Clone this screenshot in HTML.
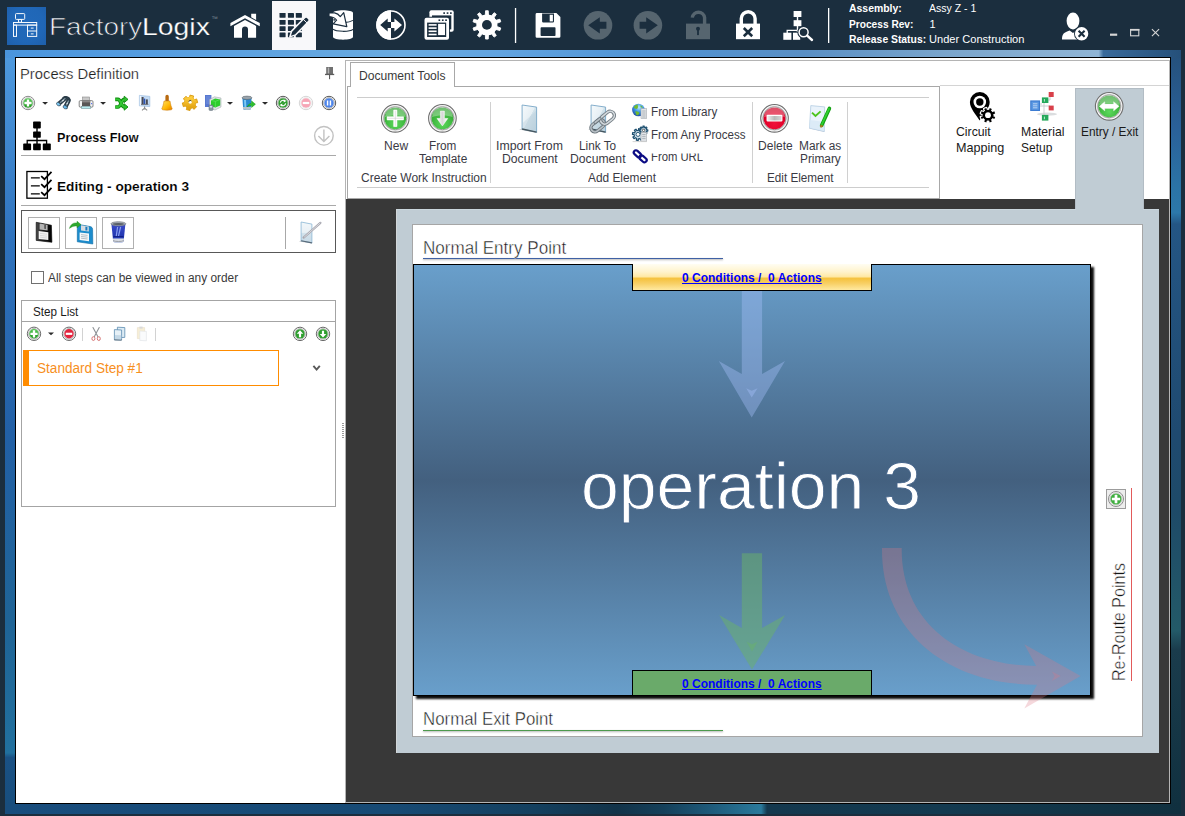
<!DOCTYPE html>
<html lang="en">
<head>
<meta charset="utf-8">
<title>FactoryLogix - Process Definition</title>
<style>
*{box-sizing:border-box;margin:0;padding:0}
html,body{width:1185px;height:816px;overflow:hidden;background:#1b2e3e;font-family:"Liberation Sans",sans-serif}
#app{position:relative;width:1185px;height:816px;overflow:hidden;background:#1b2e3e}
#app div{position:absolute}
.t{position:absolute;white-space:pre;line-height:1;transform-origin:0 0;display:block}
svg{position:absolute;left:0;top:0}

</style>
</head>
<body>
<div id="app">
<!-- window chrome / wallpaper frame -->
<div id="frame" style="left:5px;top:50px;width:1176px;height:764px;background:
 linear-gradient(90deg,#4a95dd 0%,#5aa0e0 17%,#6aabe0 34%,#62a4e0 42%,#4f93d4 55%,#5a8fc4 68%,#7aa5cc 80%,#90b5d5 93%,#3a6a9a 93.4%,#25507a 100%) top left/100% 8px no-repeat,
 linear-gradient(90deg,#184d7d 0%,#174a74 33%,#14405f 45%,#123349 52%,#15405a 56%,#1e5a7a 60%,#2a7a9c 64.3%,#14384e 64.8%,#133a50 80%,#10303f 100%) bottom left/100% 11px no-repeat,
 linear-gradient(180deg,#4f9be0 0%,#2f72bc 25%,#2260a6 50%,#1f6496 75%,#21709e 92%,#1a5184 92.6%,#174d7c 100%) top left/11px 100% no-repeat,
 linear-gradient(180deg,#25507a 0%,#2a6098 10%,#2b74a6 18%,#2c78aa 21.3%,#245684 22.8%,#1f4a70 50%,#1e4a68 60%,#235a68 76%,#1a3c4c 78.5%,#10303f 100%) top right/11px 100% no-repeat"></div>
<div id="titlebar" style="left:0;top:0;width:1185px;height:50px;background:#1b2e3e"></div>
<div id="logo" style="left:7px;top:7px;width:39px;height:38px;background:radial-gradient(ellipse at 50% 45%,#2169ba 0%,#2067b7 60%,#1e5fab 100%)"></div>
<div id="tab-process" style="left:272px;top:1px;width:44px;height:49px;background:#f8f8fa"></div>

<!-- client area -->
<div id="client" style="left:15px;top:57px;width:1156px;height:747px;background:#fff;border:1px solid #000"></div>

<!-- left panel: Process Definition -->
<div id="left-panel" style="left:16px;top:58px;width:329px;height:745px;background:#fff"></div>
<div class="hr" style="left:21px;top:155px;width:315px;height:1px;background:#a9a9a9"></div>
<div class="hr" style="left:21px;top:205px;width:315px;height:1px;background:#a9a9a9"></div>
<div id="edit-toolbar" style="left:21px;top:210px;width:315px;height:43px;border:1px solid #585858;background:#fff"></div>
<div class="btn" style="left:28px;top:217px;width:32px;height:32px;border:1px solid #b0b0b0;background:#fff"></div>
<div class="btn" style="left:65px;top:217px;width:32px;height:32px;border:1px solid #b0b0b0;background:#fff"></div>
<div class="btn" style="left:102px;top:217px;width:32px;height:32px;border:1px solid #b0b0b0;background:#fff"></div>
<div class="vsep" style="left:285px;top:217px;width:1px;height:32px;background:#a8a8a8"></div>
<div id="chk" style="left:31px;top:271px;width:13px;height:13px;border:1px solid #707070;background:#fff"></div>
<div id="steplist" style="left:21px;top:300px;width:315px;height:207px;border:1px solid #a4a4a4;background:#fff"></div>
<div class="hr" style="left:21px;top:321px;width:315px;height:1px;background:#a4a4a4"></div>
<div class="vsep" style="left:82px;top:328px;width:1px;height:13px;background:#d2d2d2"></div>
<div class="vsep" style="left:155px;top:328px;width:1px;height:13px;background:#d2d2d2"></div>
<div id="step1" style="left:23px;top:350px;width:256px;height:36px;border:1px solid #ff8c00;border-left:6px solid #ff8c00;background:#fff"></div>
<div id="splitter" style="left:342px;top:423px;width:2px;height:16px;background:repeating-linear-gradient(180deg,#9a9a9a 0,#9a9a9a 1px,#fff 1px,#fff 2px)"></div>

<!-- right panel -->
<div id="right-panel" style="left:345px;top:60px;width:825px;height:743px;background:#fff;border:1px solid #b4b4b4"></div>
<div id="side-buttons" style="left:940px;top:85px;width:229px;height:114px;background:#fff;border-top:1px solid #d4d4d4"></div>
<div id="ribbon" style="left:347px;top:86px;width:593px;height:113px;background:#fff;border:1px solid #a8a8a8"></div>
<div id="ribbon-tab" style="left:350px;top:62px;width:105px;height:25px;background:#fff;border:1px solid #a8a8a8;border-bottom:none"></div>
<div class="hr" style="left:357px;top:97px;width:572px;height:1px;background:#cdcdcd"></div>
<div class="hr" style="left:357px;top:187px;width:572px;height:1px;background:#cdcdcd"></div>
<div class="vsep" style="left:490px;top:102px;width:1px;height:81px;background:#d0d0d0"></div>
<div class="vsep" style="left:752px;top:102px;width:1px;height:81px;background:#d0d0d0"></div>
<div class="vsep" style="left:847px;top:102px;width:1px;height:81px;background:#d0d0d0"></div>

<div id="workspace" style="left:346px;top:199px;width:823px;height:603px;background:#383838"></div>
<div id="entry-tab" style="left:1075px;top:88px;width:69px;height:123px;background:#c0ccd4;border:1px solid #b2bcc4;border-bottom:none"></div>
<div id="entry-panel" style="left:396px;top:209px;width:763px;height:544px;background:#c0ccd4;border-left:1px solid #d2d6d8;border-top:1px solid #cad6dd"></div>
<div id="entry-tab-join" style="left:1076px;top:205px;width:67px;height:8px;background:#c0ccd4"></div>
<div id="entry-inner" style="left:412px;top:224px;width:731px;height:513px;background:#fff;border:1px solid #a6a6a6"></div>
<div class="ul" style="left:423px;top:258px;width:300px;height:1px;background:#3f61a5;box-shadow:0 1px 2px rgba(0,0,0,.4)"></div>
<div class="ul" style="left:423px;top:730px;width:300px;height:1px;background:#4d9a4d;box-shadow:0 1px 2px rgba(0,0,0,.4)"></div>
<div id="op-box" style="left:413px;top:264px;width:678px;height:432px;border:1px solid #000;background:linear-gradient(180deg,#699fcb 0%,#43607f 50%,#699fcb 100%);box-shadow:3px 3px 2px rgba(0,0,0,.95)"></div>
<div id="entry-cond" style="left:632px;top:264px;width:240px;height:27px;border:1px solid #000;border-top:none;background:linear-gradient(180deg,#fffdf2 0%,#fff3cc 30%,#ffe9a6 48%,#f5c23e 56%,#f8d066 75%,#ffe9a0 100%)"></div>
<div id="exit-cond" style="left:632px;top:670px;width:240px;height:26px;border:1px solid #000;background:#6aaa6a"></div>
<div id="reroute-add" style="left:1106px;top:489px;width:20px;height:20px;border:1px solid #9c9c9c;background:#ededed"></div>
<div class="vsep" style="left:1131px;top:488px;width:1px;height:193px;background:#e25a5a"></div>

<svg id="icons" width="1185" height="816" viewBox="0 0 1185 816">
<g id="ic-logo" fill="none" stroke="#f4f8fc" stroke-width="1">
<rect x="15.5" y="13.6" width="9.2" height="5.8" rx="0.8"/>
<rect x="18.5" y="19.5" width="3" height="2.8"/>
<rect x="13.5" y="22.5" width="23.2" height="2.6"/>
<rect x="13.5" y="25.1" width="3" height="11.3"/>
<rect x="27.5" y="25.1" width="9.2" height="11.3"/>
<path d="M27.5 31h9.2M30.8 28.1h2.8M30.8 33.9h2.8"/>
</g>
<g id="ic-home" fill="#ffffff">
<path d="M230.4 23.1 L245 15 L259.8 23.1 V26.3 L245 18.3 L230.4 26.3 Z"/>
<path d="M251.2 13.8 H256.1 V20 L251.2 17.3 Z"/>
<path d="M234 37.8 V25.9 L245 19.9 L256.1 25.9 V37.8 H248 V29.6 a3 3 0 0 0 -6 0 V37.8 Z"/>
</g>
<g id="ic-process" fill="#1b2e3e"><rect x="279.5" y="13.1" width="6.1" height="4.6" rx="0.4"/><rect x="287.9" y="13.1" width="6.1" height="4.6" rx="0.4"/><rect x="295.8" y="13.1" width="6.1" height="4.6" rx="0.4"/><rect x="279.5" y="20.1" width="6.1" height="4.6" rx="0.4"/><rect x="287.9" y="20.1" width="6.1" height="4.6" rx="0.4"/><rect x="295.8" y="20.1" width="6.1" height="4.6" rx="0.4"/><rect x="279.5" y="26.3" width="6.1" height="4.6" rx="0.4"/><rect x="287.9" y="26.3" width="6.1" height="4.6" rx="0.4"/><rect x="295.8" y="26.3" width="6.1" height="4.6" rx="0.4"/><rect x="279.5" y="32.6" width="6.1" height="4.6" rx="0.4"/><rect x="287.9" y="32.6" width="6.1" height="4.6" rx="0.4"/><rect x="295.8" y="32.6" width="6.1" height="4.6" rx="0.4"/>
<g transform="translate(289.8 36.9) rotate(-45.9)">
<path d="M0 0 L5.4 -2.7 H24.4 a1.8 1.8 0 0 1 1.8 1.8 V0.9 a1.8 1.8 0 0 1 -1.8 1.8 H5.4 Z" fill="#1b2e3e" stroke="#f8f8fa" stroke-width="1.5" stroke-linejoin="round"/>
<path d="M22 -2.9 V2.9" stroke="#f8f8fa" stroke-width="0.9"/>
</g></g>
<g id="ic-db" fill="#ffffff">
<path d="M333 13 C333 9.4 353 9.4 353 13 V36.8 C353 40.6 333 40.6 333 36.8 Z"/>
<path d="M333 29.2 C336 32 350 32 353 29.4" fill="none" stroke="#1b2e3e" stroke-width="1.1"/>
<path d="M344 22.6 C348 22.4 351 21.6 353 20.4" fill="none" stroke="#1b2e3e" stroke-width="1.1"/>
<path d="M329 12.9 H334.6 C337.4 13.4 339 14.8 340.3 16.6 L343.7 12.7 L346.8 26.6 L333.1 23.8 L336.6 20.2 C335.4 18.2 333.6 16.8 329 16.5 Z" stroke="#1b2e3e" stroke-width="1.2" stroke-linejoin="round"/>
<path d="M333.2 18.4 L335.6 19.8 L333.8 21.2 Z" fill="#1b2e3e"/>
</g>
<g id="ic-route">
<circle cx="391" cy="25" r="14" fill="none" stroke="#ffffff" stroke-width="1.6"/>
<path d="M391 10.2 A14.8 14.8 0 0 0 391 39.8 Z" fill="#ffffff"/>
<path d="M380.2 25 L387.7 18.6 V22.1 H391 V27.9 H387.7 V31.4 Z" fill="#1b2e3e"/>
<path d="M402 25 L394.4 18.6 V22.1 H391 V27.9 H394.4 V31.4 Z" fill="#ffffff"/>
</g>
<g id="ic-windows">
<rect x="429.4" y="10.2" width="24.3" height="21.5" rx="2" fill="#ffffff"/>
<rect x="432" y="15.4" width="19.3" height="14" fill="#1b2e3e"/>
<rect x="423.6" y="16.8" width="26.3" height="23.8" rx="2.6" fill="#1b2e3e"/>
<rect x="424.5" y="17.7" width="24.5" height="22" rx="2" fill="#ffffff"/>
<rect x="427.1" y="22.6" width="19.1" height="14.4" fill="#1b2e3e"/>
<g fill="#1b2e3e">
<rect x="443.3" y="12.3" width="1.7" height="1.6"/><rect x="446.7" y="12.3" width="1.7" height="1.6"/><rect x="450" y="12.3" width="1.7" height="1.6"/>
<rect x="438.5" y="19.4" width="1.7" height="1.6"/><rect x="441.9" y="19.4" width="1.7" height="1.6"/><rect x="445.2" y="19.4" width="1.7" height="1.6"/>
</g>
<g fill="#ffffff">
<rect x="428.6" y="24.1" width="8" height="1.6"/><rect x="428.6" y="27.3" width="8" height="1.6"/><rect x="428.6" y="30.5" width="8" height="1.6"/><rect x="428.6" y="33.7" width="8" height="1.6"/>
<rect x="438.1" y="23.9" width="6.9" height="11.2"/>
</g></g>
<g id="ic-gear"><path d="M485.34,15.02 L485.56,10.76 L488.24,10.76 L488.46,15.02 L491.44,15.99 L494.13,12.68 L496.29,14.25 L493.97,17.83 L495.81,20.36 L499.93,19.26 L500.76,21.80 L496.78,23.34 L496.78,26.46 L500.76,28.00 L499.93,30.54 L495.81,29.44 L493.97,31.97 L496.29,35.55 L494.13,37.12 L491.44,33.81 L488.46,34.78 L488.24,39.04 L485.56,39.04 L485.34,34.78 L482.36,33.81 L479.67,37.12 L477.51,35.55 L479.83,31.97 L477.99,29.44 L473.87,30.54 L473.04,28.00 L477.02,26.46 L477.02,23.34 L473.04,21.80 L473.87,19.26 L477.99,20.36 L479.83,17.83 L477.51,14.25 L479.67,12.68 L482.36,15.99Z" fill="#ffffff" stroke="#ffffff" stroke-width="0.9" stroke-linejoin="round"/><circle cx="486.9" cy="24.9" r="10.4" fill="#ffffff"/><circle cx="486.9" cy="24.9" r="4.9" fill="#1b2e3e"/></g>
<g id="ic-save">
<path d="M537 13 H556.4 L560.4 17 V36.4 a1.4 1.4 0 0 1 -1.4 1.4 H537 a1.4 1.4 0 0 1 -1.4 -1.4 V14.4 a1.4 1.4 0 0 1 1.4 -1.4 Z" fill="#ffffff"/>
<path d="M542.1 13.6 H554 V21.6 a0.8 0.8 0 0 1 -0.8 0.8 H542.9 a0.8 0.8 0 0 1 -0.8 -0.8 Z" fill="#1b2e3e"/>
<rect x="549.7" y="14.8" width="3.2" height="6.6" fill="#ffffff"/>
<rect x="540.6" y="27.2" width="14.9" height="8.9" rx="0.8" fill="#1b2e3e"/>
</g>
<g id="ic-back"><circle cx="598" cy="25.3" r="14.3" fill="#56656f"/>
<path d="M588.2 25.3 L599.8 17.2 V21.8 H606.4 V28.8 H599.8 V33.4 Z" fill="#1b2e3e"/></g>
<g id="ic-fwd"><circle cx="647.9" cy="25.3" r="14.3" fill="#56656f"/>
<path d="M657.8 25.3 L646.2 17.2 V21.8 H639.6 V28.8 H646.2 V33.4 Z" fill="#1b2e3e"/></g>
<g id="ic-unlock">
<rect x="686" y="23.6" width="24" height="15.6" fill="#56656f"/>
<path d="M692.3 17.6 A6.2 6.2 0 0 1 704.6 17.6 V24" fill="none" stroke="#56656f" stroke-width="3.4"/>
<circle cx="698" cy="28.8" r="2" fill="#1b2e3e"/><rect x="697.1" y="29.5" width="1.8" height="5.6" fill="#1b2e3e"/>
</g>
<g id="ic-lockx">
<rect x="736" y="23.6" width="24" height="15.6" fill="#ffffff"/>
<path d="M741.3 24 V18.6 A6.9 6.9 0 0 1 755.1 18.6 V24" fill="none" stroke="#ffffff" stroke-width="3.4"/>
<path d="M743.8 28 L752.2 36.2 M752.2 28 L743.8 36.2" stroke="#1b2e3e" stroke-width="2.6"/>
</g>
<g id="ic-orgsearch" fill="#ffffff">
<rect x="793.6" y="11" width="7.8" height="6"/>
<rect x="793.6" y="20.2" width="7.8" height="6"/>
<rect x="796.8" y="16" width="1.4" height="16"/>
<path d="M787.2 33 V30.4 H798" fill="none" stroke="#ffffff" stroke-width="1.3"/>
<rect x="783.3" y="32.7" width="8.1" height="7.1"/>
<rect x="793" y="32.7" width="7.2" height="7.1"/>
<circle cx="803.6" cy="32.2" r="5.2" fill="#1b2e3e" stroke="#1b2e3e" stroke-width="2.2"/>
<circle cx="803.6" cy="32.2" r="4.5" fill="#1b2e3e" stroke="#ffffff" stroke-width="1.5"/>
<path d="M807.2 35.6 L812 40" stroke="#ffffff" stroke-width="2.4" stroke-linecap="round"/>
</g>
<g id="ic-user" fill="#ffffff">
<ellipse cx="1073" cy="21" rx="6.4" ry="8.4"/>
<path d="M1062 39.6 C1062 33.6 1064 32.4 1069.6 30.4 L1073 33 L1076.4 30.4 C1079 31.2 1081 32 1082 33 V39.6 Z"/>
<circle cx="1081.6" cy="33.7" r="7.6" fill="#1b2e3e"/>
<circle cx="1081.6" cy="33.7" r="6.7" fill="#ffffff"/>
<path d="M1078.6 30.7 L1084.6 36.7 M1084.6 30.7 L1078.6 36.7" stroke="#1b2e3e" stroke-width="2.1"/>
</g>
<g id="ic-winctl" fill="none" stroke="#d6d6d6">
<path d="M1110 34.7 H1117.2" stroke-width="2.2"/>
<rect x="1130.6" y="29.6" width="8.2" height="6.2" stroke-width="1.1"/>
<path d="M1130 29.8 H1139.4" stroke-width="1.8"/>
<path d="M1151.9 29.2 L1159.1 36.2 M1159.1 29.2 L1151.9 36.2" stroke-width="1.1"/>
</g>
<g id="title-seps" fill="#fff"><rect x="514.9" y="8" width="1.3" height="35"/><rect x="828" y="8" width="1.3" height="35"/></g>
<defs>
<linearGradient id="gGreen" x1="0" y1="0" x2="0" y2="1"><stop offset="0" stop-color="#58c858"/><stop offset="1" stop-color="#1e961e"/></linearGradient>
<linearGradient id="gBell" x1="0" y1="0" x2="1" y2="1"><stop offset="0" stop-color="#ffe060"/><stop offset=".6" stop-color="#ffb400"/><stop offset="1" stop-color="#e07800"/></linearGradient>
<linearGradient id="gGold" x1="0" y1="0" x2="0" y2="1"><stop offset="0" stop-color="#ffd040"/><stop offset="1" stop-color="#e0a010"/></linearGradient>
<linearGradient id="gBin" x1="0" y1="0" x2="0" y2="1"><stop offset="0" stop-color="#3a4ac8"/><stop offset=".7" stop-color="#2036b0"/><stop offset="1" stop-color="#6a8ae8"/></linearGradient>
<linearGradient id="gDoc" x1="0" y1="0" x2="0" y2="1"><stop offset="0" stop-color="#f2f7fa"/><stop offset=".5" stop-color="#e8f0f5"/><stop offset=".52" stop-color="#d4e3ec"/><stop offset="1" stop-color="#c6d9e6"/></linearGradient>
<linearGradient id="gFloppy" x1="0" y1="0" x2="1" y2="0"><stop offset="0" stop-color="#4a4a4a"/><stop offset=".5" stop-color="#1a1a1a"/><stop offset="1" stop-color="#000"/></linearGradient>
</defs>
<g id="pd-toolbar">
<g transform="translate(28 103)">
<circle r="6.7" fill="#fff" stroke="#8c8c8c" stroke-width="1"/>
<circle r="5.3" fill="none" stroke="#8c8c8c" stroke-width="0.7" opacity=".7"/>
<circle r="4.7" fill="url(#gGreen)"/>
<g transform="scale(.9)"><path d="M-1.3 -4 H1.3 V-1.3 H4 V1.3 H1.3 V4 H-1.3 V1.3 H-4 V-1.3 H-1.3 Z" fill="#fff"/></g></g>
<path d="M42.2 102 H48 L45.1 104.8 Z" fill="#2a2a2a"/>
<g id="ic-find" stroke-linecap="round">
<path d="M59 103.6 L65.4 98.2" stroke="#2a3c48" stroke-width="4.2"/>
<path d="M65.6 106.6 L68.6 100.6" stroke="#2a3c48" stroke-width="4.4"/>
<path d="M63.6 98 C65.6 96.4 68.6 97.4 69.4 99.6" stroke="#2a3c48" stroke-width="2.6" fill="none"/>
<path d="M60.4 102.6 L65 98.6" stroke="#7e929e" stroke-width="1.3"/>
<path d="M66.4 105 L68.4 101" stroke="#7e929e" stroke-width="1.3"/>
<path d="M62.6 100.8 L63.4 100.1 M67 103.8 L67.4 103" stroke="#e8f0f4" stroke-width="1.1"/>
<ellipse cx="58.4" cy="104.2" rx="2.2" ry="1.5" transform="rotate(40 58.4 104.2)" fill="#7cc6f0" stroke="#2a3c48" stroke-width="0.5"/>
<ellipse cx="65.2" cy="107.2" rx="2.3" ry="1.6" transform="rotate(30 65.2 107.2)" fill="#6ab8ea" stroke="#2a3c48" stroke-width="0.5"/>
</g>
<g id="ic-print">
<rect x="82.6" y="97" width="7" height="4" fill="#c8c8c8" stroke="#8a8a8a" stroke-width="0.6"/>
<rect x="79.2" y="100.6" width="13.8" height="6.6" rx="1.2" fill="#f4f4f4" stroke="#6a6a6a" stroke-width="0.8"/>
<rect x="82" y="100.8" width="8.2" height="5.2" fill="#5a5656"/>
<rect x="82" y="100.8" width="8.2" height="1.6" fill="#8a8686"/>
<rect x="81.4" y="106.4" width="9.4" height="2.2" fill="#b8ecf0" stroke="#6a8a90" stroke-width="0.5"/>
<rect x="91.2" y="103" width="0.9" height="1.2" fill="#3a5af0"/>
</g>
<path d="M100.1 102 H106 L103.05 104.8 Z" fill="#2a2a2a"/>
<g id="ic-shuffle" fill="none" stroke-linejoin="round">
<g stroke="#0c8a0c" stroke-width="3.6"><path d="M115.2 99.4 H118 C121 99.4 121 107 124.4 107"/><path d="M115.2 107 H118 C121 107 121 99.4 124.4 99.4"/></g>
<path d="M124.2 96.2 L128 99.4 L124.2 102.6 Z M124.2 103.8 L128 107 L124.2 110.2 Z" fill="#30c030" stroke="#0c8a0c" stroke-width="0.9"/>
<g stroke="#34c634" stroke-width="1.9"><path d="M115.2 99.4 H118 C121 99.4 121 107 124.8 107"/><path d="M115.2 107 H118 C121 107 121 99.4 124.8 99.4"/></g>

</g>
<g id="ic-present">
<path d="M144.6 106 V109.4 M144.6 108.2 L142 110.4 M144.6 108.2 L147.2 110.4" stroke="#8a8a8a" stroke-width="1.1" fill="none"/>
<path d="M139.4 95.4 L149.8 96.4 V106.6 L139.4 105.8 Z" fill="#c4dcf6" stroke="#9cbce0" stroke-width="0.7"/><path d="M139.8 95.8 L141.2 96 V105.6 L139.8 105.4 Z" fill="#f2f8fe"/>
<rect x="141.6" y="97" width="2" height="7.2" fill="#4a4a52"/>
<rect x="143.6" y="98.6" width="1.6" height="5.4" fill="#2c54b8"/>
<rect x="145.8" y="99.4" width="2" height="4.8" fill="#4a4a52"/>
<path d="M141 104.4 H148.4" stroke="#5a5a62" stroke-width="0.8"/>
</g>
<g id="ic-bell">
<path d="M165.4 96.4 a1.7 1.7 0 0 1 3.4 0 V101 H165.4 Z" fill="#b86a10"/>
<path d="M164 101 H170 C170.6 104.4 171.2 106.8 172.2 108.6 C172.4 109.6 171 110.2 167 110.2 C163 110.2 161.6 109.6 161.8 108.6 C162.8 106.8 163.4 104.4 164 101 Z" fill="url(#gBell)" stroke="#c87808" stroke-width="0.5"/>
</g>
<g id="ic-settings"><path d="M189.64,97.21 L189.99,95.10 L193.70,96.05 L192.99,98.07 L194.66,99.69 L196.66,98.94 L197.70,102.63 L195.60,103.03 L195.02,105.28 L196.67,106.64 L194.00,109.38 L192.60,107.76 L190.36,108.39 L190.01,110.50 L186.30,109.55 L187.01,107.53 L185.34,105.91 L183.34,106.66 L182.30,102.97 L184.40,102.57 L184.98,100.32 L183.33,98.96 L186.00,96.22 L187.40,97.84Z" fill="url(#gGold)" stroke="#d89a10" stroke-width="0.9" stroke-linejoin="round"/><circle cx="190" cy="102.8" r="5.8" fill="url(#gGold)"/><circle cx="190.2" cy="102" r="1.7" fill="#fff"/><path d="M188.8 101.6 a1.5 1.5 0 0 1 2.6 -0.6" stroke="#3a3010" stroke-width="1" fill="none"/></g>
<g id="ic-deploy">
<rect x="205" y="95" width="6.4" height="12" fill="#5878d0"/>
<path d="M206 97 H210.6 M206 99 H210.6 M206 101 H210.6 M206 103 H210.6" stroke="#8aa4e4" stroke-width="0.6"/>
<path d="M209.6 99.6 L214.4 96.8 L221 98 V107 L215 110 L209.6 108 Z" fill="#e0e4e6" stroke="#9aa0a4" stroke-width="0.5"/>
<path d="M211 100.4 L215.2 98.6 L220.2 99.4 V105.6 L215.4 107.6 L211 106.2 Z" fill="#2ccc2c"/>
<path d="M211 100.4 L215.4 101.4 L220.2 99.4 M215.4 101.4 V107.6" stroke="#68e868" stroke-width="0.6" fill="none"/>
<rect x="209" y="105" width="4" height="5.4" rx="0.8" fill="#8a98a4" stroke="#5a6874" stroke-width="0.5"/>
<rect x="209.8" y="106" width="2.4" height="1.6" fill="#d0e0ea"/>
</g>
<path d="M227 102 H233 L230.0 104.8 Z" fill="#2a2a2a"/>
<g id="ic-recycle">
<path d="M242.4 98 H251.6 L250.8 109 C250.6 110.2 243.4 110.2 243.2 109 Z" fill="#2a8ad2"/>
<path d="M244 100 L244.6 108.6 H246.4 L246 100 Z" fill="#7cc8f4"/>
<path d="M242.8 107 H251.2 L250.8 109 C250.6 110.2 243.4 110.2 243.2 109 Z" fill="#b8c4cc"/>
<ellipse cx="247" cy="97.8" rx="4.9" ry="1.7" fill="#9aa4ac" stroke="#5a646c" stroke-width="0.6"/>
<path d="M247 106.8 C248.4 104.4 250 103.4 251.6 103.2 V101 L255.4 104.2 L251.6 107.4 V105.4 C250 105.4 248.6 105.8 247 106.8 Z" fill="#30c030" stroke="#109010" stroke-width="0.5"/>
</g>
<path d="M262 102 H268 L265.0 104.8 Z" fill="#2a2a2a"/>
<g transform="translate(283 103)">
<circle r="6.7" fill="#fff" stroke="#5a5a5a" stroke-width="1"/>
<circle r="5.3" fill="none" stroke="#5a5a5a" stroke-width="0.7" opacity=".7"/>
<circle r="4.7" fill="#2f9e2f"/>
<g transform="scale(.9)"><path d="M-3 -0.5 A3 3 0 0 1 1.8 -2.4 M3 0.5 A3 3 0 0 1 -1.8 2.4" fill="none" stroke="#fff" stroke-width="1.2"/><path d="M0.8 -4.2 L3.8 -2.2 L0.8 -0.6 Z M-0.8 4.2 L-3.8 2.2 L-0.8 0.6 Z" fill="#fff"/></g></g>
<g transform="translate(306 103)">
<circle r="6.7" fill="#fff" stroke="#d6d6d6" stroke-width="1"/>
<circle r="5.3" fill="none" stroke="#d6d6d6" stroke-width="0.7" opacity=".7"/>
<circle r="4.7" fill="#f6a6b6"/>
<g transform="scale(.9)"><rect x="-3.6" y="-1.2" width="7.2" height="2.4" fill="#fff"/></g></g>
<g transform="translate(329 103)">
<circle r="6.7" fill="#fff" stroke="#5a5a5a" stroke-width="1"/>
<circle r="5.3" fill="none" stroke="#5a5a5a" stroke-width="0.7" opacity=".7"/>
<circle r="4.7" fill="#4c84ea"/>
<g transform="scale(.9)"><rect x="-2.4" y="-2.8" width="1.6" height="5.6" fill="#fff"/><rect x="0.8" y="-2.8" width="1.6" height="5.6" fill="#fff"/></g></g>
</g>
<g id="ic-pin" fill="#6a6a6a">
<rect x="326.2" y="67" width="6.8" height="7" fill="#707070"/>
<rect x="327.8" y="67.6" width="1.4" height="6" fill="#b4b4b4"/>
<rect x="325" y="73.8" width="9.2" height="1.3" fill="#5c5c5c"/>
<rect x="329" y="75" width="1.1" height="4.2" fill="#5c5c5c"/>
</g>
<g id="ic-flow" fill="#000">
<rect x="33.1" y="121.5" width="7.7" height="6.9" rx="0.8"/>
<rect x="33.1" y="131.5" width="7.7" height="6.3" rx="0.8"/>
<rect x="36.3" y="128" width="1.4" height="16"/>
<path d="M27.2 144 V140.5 H46.6 V144" fill="none" stroke="#000" stroke-width="1.3"/>
<rect x="23.2" y="143.6" width="7.9" height="6.6" rx="0.8"/>
<rect x="33.1" y="143.6" width="7.7" height="6.6" rx="0.8"/>
<rect x="42.8" y="143.6" width="8" height="6.6" rx="0.8"/>
</g>
<g id="ic-collapse" fill="none" stroke="#c2c2c2" stroke-width="1.4">
<circle cx="323.9" cy="135.8" r="9.3"/>
<path d="M323.9 129.6 V141.4 M318.4 136 L323.9 141.6 L329.4 136"/>
</g>
<g id="ic-checklist" fill="none" stroke="#000">
<rect x="26.9" y="171.5" width="20.5" height="26.7" stroke-width="1.3" fill="#fff"/>
<path d="M30.9 177.8 H39.8 M30.9 185.8 H39.8 M30.9 193.8 H39.8" stroke-width="1.2"/>
<path d="M41.2 176.2 L44.5 179.2 L51.5 171.8 M41.2 184.2 L44.5 187.2 L51.5 179.8 M41.2 192.2 L44.5 195.2 L51.5 187.8" stroke-width="1.7"/>
</g>
<g id="ic-save2">
<path d="M36.2 222.3 L51.4 225.2 L51.9 242.3 L36.2 240.4 Z" fill="url(#gFloppy)" stroke="#000" stroke-width="0.6" stroke-linejoin="round"/>
<path d="M39.6 223.4 L47.6 224.9 V230.4 L39.6 229.4 Z" fill="#b4b4b4"/>
<path d="M44.2 224.8 L46 225.1 V229 L44.2 228.8 Z" fill="#5a5a5a"/>
<path d="M38.7 231 L48.3 232.2 V240 L38.7 238.9 Z" fill="#f4f4f4"/>
<path d="M40 233.4 L47 234.2 M40 235.4 L47 236.2 M40 237.2 L47 238" stroke="#c8c8c8" stroke-width="0.6"/>
</g>
<g id="ic-saveas">
<path d="M77.3 224.2 L90.4 226.6 C91.8 227 92.6 228 92.6 229.4 L92.8 244 L77.3 241.8 Z" fill="#1c8ccc" stroke="#0a6aa4" stroke-width="0.6" stroke-linejoin="round"/>
<path d="M81 225.2 L88.8 226.6 V231.6 L81 230.6 Z" fill="#d8dce0"/>
<path d="M85.4 226.6 L87.4 227 V230.6 L85.4 230.4 Z" fill="#1c7cc0"/>
<path d="M79.6 232.4 L89 233.6 V241.2 L79.6 240 Z" fill="#f6f8fa"/>
<path d="M81 234.6 L87.6 235.4 M81 236.4 L87.6 237.2 M81 238.2 L87.6 239" stroke="#8a9aa4" stroke-width="0.6"/>
<path d="M69.4 228.4 C70.6 224 74 222.4 77 223 V221.2 L81 224.6 L77 227.8 V226 C74.6 225.6 72 226.4 69.4 228.4 Z" fill="#2ea82e" stroke="#158a15" stroke-width="0.4"/>
</g>
<g id="ic-trash">
<path d="M111.4 224 H125.4 L123.6 241.4 C123.4 243.2 113.4 243.2 113.2 241.4 Z" fill="url(#gBin)"/>
<path d="M112.8 238.4 H124 L123.6 241.4 C123.4 243.2 113.4 243.2 113.2 241.4 Z" fill="#d8dce4"/>
<path d="M113 240.6 C115 241.8 121.8 241.8 123.8 240.6" stroke="#8a8e96" stroke-width="0.8" fill="none"/>
<path d="M117.6 227 L116.2 236.4 M120.6 227 L118.4 236.4" stroke="#8aa0f0" stroke-width="1.2"/>
<path d="M113.4 236.6 H123.4" stroke="#101c80" stroke-width="1"/>
<ellipse cx="118.4" cy="223.8" rx="7.4" ry="2" fill="#aab0b8" stroke="#787e86" stroke-width="0.8"/>
<ellipse cx="118.4" cy="224" rx="5.6" ry="1.1" fill="#5a6068"/>
</g>
<g id="ic-edit">
<path d="M299 241.6 L312 243.6 L312.6 242.6 L301 240.6 Z" fill="#9aa0a6" opacity=".6"/>
<path d="M301.1 222 L311.9 224.1 V242.9 L301.1 240.8 Z" fill="url(#gDoc)" stroke="#8ab6d4" stroke-width="0.8" stroke-linejoin="round"/>
<path d="M301.1 240.8 L311.9 242.9" stroke="#5a6a78" stroke-width="1.1"/>
<path d="M303.6 237.6 L320.4 222.8" stroke="#a8a8b0" stroke-width="2.2" stroke-linecap="round"/>
<path d="M304.4 237 L320 223.2" stroke="#e4e4ea" stroke-width="0.8" stroke-linecap="round"/>
</g>
<g id="sl-toolbar">
<g transform="translate(34 333.8)">
<circle r="6.7" fill="#fff" stroke="#6a6a6a" stroke-width="1"/>
<circle r="5.3" fill="none" stroke="#6a6a6a" stroke-width="0.7" opacity=".7"/>
<circle r="4.7" fill="url(#gGreen)"/>
<g transform="scale(.9)"><path d="M-1.3 -4 H1.3 V-1.3 H4 V1.3 H1.3 V4 H-1.3 V1.3 H-4 V-1.3 H-1.3 Z" fill="#fff"/></g></g>
<path d="M48 332.4 H54 L51.0 335.2 Z" fill="#2a2a2a"/>
<g transform="translate(69 333.8)">
<circle r="6.7" fill="#fff" stroke="#6a6a6a" stroke-width="1"/>
<circle r="5.3" fill="none" stroke="#6a6a6a" stroke-width="0.7" opacity=".7"/>
<circle r="4.7" fill="#e2243e"/>
<g transform="scale(.9)"><rect x="-3.6" y="-1.2" width="7.2" height="2.4" fill="#fff"/></g></g>
<g id="ic-cut">
<path d="M93 327.6 L97.8 336.6 M99.2 327.6 L94.4 336.6" stroke="#8e9296" stroke-width="1.1" stroke-linecap="round"/>
<ellipse cx="93.4" cy="338.6" rx="1.5" ry="1.9" fill="none" stroke="#d67474" stroke-width="1"/>
<ellipse cx="98.8" cy="338.6" rx="1.5" ry="1.9" fill="none" stroke="#d67474" stroke-width="1"/>
</g>
<g id="ic-copy">
<path d="M117.4 327.2 L124.8 327.6 V337.4 L117.4 337.6 Z" fill="#dcebf4" stroke="#5c8cb0" stroke-width="0.8"/>
<path d="M114.4 329.6 L121.6 330 V340 L114.4 339.8 Z" fill="#e6f0f6" stroke="#5c8cb0" stroke-width="0.8"/>
<path d="M114.4 339.8 L121.6 340" stroke="#4a5a68" stroke-width="1"/>
<path d="M115 335 L121.2 335.2 V339.4 L115 339.2 Z" fill="#c4d8e6"/>
</g>
<g id="ic-paste" opacity=".42">
<path d="M137.4 327.6 H144.6 V338.6 H137.4 Z" fill="#ecd9a0" stroke="#cdb27a" stroke-width="0.6"/>
<rect x="139.4" y="326.6" width="3.2" height="2" fill="#a8a8a8"/>
<path d="M139.8 331 L146.4 331.4 V340.8 L139.8 340.4 Z" fill="#f4f6f8" stroke="#b4bcc4" stroke-width="0.6"/>
</g>
<g transform="translate(300 333.9)">
<circle r="6.7" fill="#fff" stroke="#6a6a6a" stroke-width="1"/>
<circle r="5.3" fill="none" stroke="#6a6a6a" stroke-width="0.7" opacity=".7"/>
<circle r="4.7" fill="#2f9e2f"/>
<g transform="scale(.9)"><path d="M0 -4 L3.6 -0.2 H1.2 V3.6 H-1.2 V-0.2 H-3.6 Z" fill="#fff"/></g></g>
<g transform="translate(323 333.9)">
<circle r="6.7" fill="#fff" stroke="#6a6a6a" stroke-width="1"/>
<circle r="5.3" fill="none" stroke="#6a6a6a" stroke-width="0.7" opacity=".7"/>
<circle r="4.7" fill="#2f9e2f"/>
<g transform="scale(.9)"><path d="M0 4 L3.6 0.2 H1.2 V-3.6 H-1.2 V0.2 H-3.6 Z" fill="#fff"/></g></g>
</g>
<path id="ic-expand" d="M313.4 365.8 L316.6 369.6 L319.8 365.8" fill="none" stroke="#5a5a5a" stroke-width="1.9"/>
<defs>
<radialGradient id="rgGreen" cx=".5" cy=".75" r=".8"><stop offset="0" stop-color="#5cd85c"/><stop offset=".6" stop-color="#3cb43c"/><stop offset="1" stop-color="#2c9a2c"/></radialGradient>
<radialGradient id="rgRed" cx=".5" cy=".75" r=".8"><stop offset="0" stop-color="#f0103a"/><stop offset=".6" stop-color="#e00028"/><stop offset="1" stop-color="#c40020"/></radialGradient>
<linearGradient id="gBar" x1="0" y1="0" x2="1" y2="0"><stop offset="0" stop-color="#f0f0f0"/><stop offset=".5" stop-color="#b8b8b8"/><stop offset="1" stop-color="#d8d8d8"/></linearGradient>
<linearGradient id="gArrW" x1="0" y1="0" x2="1" y2="0"><stop offset="0" stop-color="#fff"/><stop offset=".5" stop-color="#d8d8d8"/><stop offset="1" stop-color="#fff"/></linearGradient>
<linearGradient id="gDocBig" x1="0" y1="0" x2="1" y2="1"><stop offset="0" stop-color="#f6fafc"/><stop offset=".48" stop-color="#e6eff4"/><stop offset=".5" stop-color="#d2e2ea"/><stop offset="1" stop-color="#bcd2de"/></linearGradient>
<radialGradient id="rgGlobe" cx=".55" cy=".3" r=".8"><stop offset="0" stop-color="#b8e8fc"/><stop offset=".45" stop-color="#3c94e4"/><stop offset="1" stop-color="#1a3c94"/></radialGradient>
<linearGradient id="gChain" x1="0" y1="0" x2="0" y2="1"><stop offset="0" stop-color="#dfe4e8"/><stop offset="1" stop-color="#7c868e"/></linearGradient>
</defs>
<g id="ic-new"><g transform="translate(395.3 118.3)">
<circle r="13.8" fill="#fff" stroke="#6e6e6e" stroke-width="1.1"/>
<circle r="12.1" fill="none" stroke="#c8c8c8" stroke-width="0.8"/>
<circle r="11.4" fill="none" stroke="#7a7a7a" stroke-width="0.7"/>
<circle r="10.9" fill="url(#rgGreen)"/>
<path d="M-10.4 -1 A10.4 10.4 0 0 1 10.4 -1 C6 -3.4 -6 -3.4 -10.4 -1 Z" fill="#fff" opacity=".32"/>
<path d="M-1.6 -8.2 H1.6 V-1.6 H8.2 V1.6 H1.6 V8.2 H-1.6 V1.6 H-8.2 V-1.6 H-1.6 Z" fill="#fff" stroke="#fff" stroke-width="0.6" stroke-linejoin="round"/><path d="M0 -7.6 V7.6 M-7.6 0 H7.6" stroke="#c4c4c4" stroke-width="0.5"/></g></g>
<g id="ic-template"><g transform="translate(442.4 118.3)">
<circle r="13.8" fill="#fff" stroke="#6e6e6e" stroke-width="1.1"/>
<circle r="12.1" fill="none" stroke="#c8c8c8" stroke-width="0.8"/>
<circle r="11.4" fill="none" stroke="#7a7a7a" stroke-width="0.7"/>
<circle r="10.9" fill="url(#rgGreen)"/>
<path d="M-10.4 -1 A10.4 10.4 0 0 1 10.4 -1 C6 -3.4 -6 -3.4 -10.4 -1 Z" fill="#fff" opacity=".32"/>
<path d="M-2 -7.2 H2 V0.2 H5.4 L0 7.6 L-5.4 0.2 H-2 Z" fill="url(#gArrW)" stroke="#fff" stroke-width="0.5" stroke-linejoin="round"/></g></g>
<g id="ic-import"><g transform="translate(522.1 105)">
<path d="M-3 24.4 L14.6 27.9 L15.4 27.2 L0 23.6 Z" fill="#7a848c" opacity=".45"/>
<path d="M0 0 L14.5 2.1 V27.2 L0 24 Z" fill="url(#gDocBig)" stroke="#78a6c6" stroke-width="0.9" stroke-linejoin="round"/>
<path d="M0.6 18 L13.9 6 V26.4 L0.6 23.4 Z" fill="#b4ccda" opacity=".35"/>
<path d="M0 24 L14.5 27.2" stroke="#46565f" stroke-width="1.3"/>
</g></g>
<g id="ic-linkdoc"><g transform="translate(591.1 105)">
<path d="M-3 24.4 L14.6 27.9 L15.4 27.2 L0 23.6 Z" fill="#7a848c" opacity=".45"/>
<path d="M0 0 L14.5 2.1 V27.2 L0 24 Z" fill="url(#gDocBig)" stroke="#78a6c6" stroke-width="0.9" stroke-linejoin="round"/>
<path d="M0.6 18 L13.9 6 V26.4 L0.6 23.4 Z" fill="#b4ccda" opacity=".35"/>
<path d="M0 24 L14.5 27.2" stroke="#46565f" stroke-width="1.3"/>
</g>
<g transform="translate(602.4 121.8) rotate(-39)" fill="none" stroke-linecap="round">
<rect x="-13.6" y="-4" width="15" height="8" rx="4" stroke="#6e787f" stroke-width="3.4"/>
<rect x="-13.6" y="-4" width="15" height="8" rx="4" stroke="#b9c1c7" stroke-width="1.6"/>
<rect x="-1.2" y="-4.2" width="15.4" height="8.4" rx="4.2" stroke="#747e85" stroke-width="3.4"/>
<rect x="-1.2" y="-4.2" width="15.4" height="8.4" rx="4.2" stroke="#d3d9dd" stroke-width="1.6"/>
<path d="M-6 -4 H0" stroke="#6e787f" stroke-width="3.4"/><path d="M-6 -4 H0" stroke="#b9c1c7" stroke-width="1.6"/>
</g></g>
<g id="ic-library">
<circle cx="638.4" cy="110" r="6.3" fill="url(#rgGlobe)"/>
<path d="M633.6 107.6 C634.6 105.6 636.4 104.6 637.8 104.6 C637.4 106 638.6 106.8 637.6 108.2 C636.6 109.6 635.4 108.6 633.6 107.6 Z M635.4 111.4 C636.8 110.8 638.6 111.6 639.4 113 C639 114.6 637.8 115.4 636.6 115.4 C636.4 113.8 635.2 113 635.4 111.4 Z M640.2 105.4 C641.6 105.6 642.6 106.6 643 107.4 L641 107.6 Z" fill="#72bc2c"/>
<rect x="641" y="108.7" width="5.7" height="9.8" fill="#e2e5e8" stroke="#a8adb2" stroke-width="0.6"/>
<path d="M642.2 111 H645.6 M642.2 113 H645.6 M642.2 115 H645.6 M642.2 117 H645.6" stroke="#9aa0a6" stroke-width="0.7"/>
</g>
<g id="ic-anyprocess">
<path d="M642.70,134.58 L644.40,134.82 L644.01,136.73 L642.35,136.29 L641.45,137.63 L642.48,139.00 L640.86,140.07 L640.00,138.59 L638.42,138.90 L638.18,140.60 L636.27,140.21 L636.71,138.55 L635.37,137.65 L634.00,138.68 L632.93,137.06 L634.41,136.20 L634.10,134.62 L632.40,134.38 L632.79,132.47 L634.45,132.91 L635.35,131.57 L634.32,130.20 L635.94,129.13 L636.80,130.61 L638.38,130.30 L638.62,128.60 L640.53,128.99 L640.09,130.65 L641.43,131.55 L642.80,130.52 L643.87,132.14 L642.39,133.00Z" fill="#cfe0ea" stroke="#1c4e6e" stroke-width="1.2" stroke-linejoin="round"/>
<circle cx="638" cy="134.4" r="2" fill="#fff" stroke="#1c4e6e" stroke-width="0.9"/>
<path d="M646.54,129.79 L647.84,129.70 L647.84,131.10 L646.54,131.01 L646.11,132.05 L647.09,132.91 L646.11,133.89 L645.25,132.91 L644.21,133.34 L644.30,134.64 L642.90,134.64 L642.99,133.34 L641.95,132.91 L641.09,133.89 L640.11,132.91 L641.09,132.05 L640.66,131.01 L639.36,131.10 L639.36,129.70 L640.66,129.79 L641.09,128.75 L640.11,127.89 L641.09,126.91 L641.95,127.89 L642.99,127.46 L642.90,126.16 L644.30,126.16 L644.21,127.46 L645.25,127.89 L646.11,126.91 L647.09,127.89 L646.11,128.75Z" fill="#cfe0ea" stroke="#1c4e6e" stroke-width="1.1" stroke-linejoin="round"/>
<circle cx="643.6" cy="130.4" r="1.2" fill="#fff" stroke="#3a3a3a" stroke-width="0.8"/>
<rect x="641" y="132.4" width="5.7" height="8.8" fill="#e2e5e8" stroke="#a8adb2" stroke-width="0.6"/>
<path d="M642.2 134.6 H645.6 M642.2 136.6 H645.6 M642.2 138.6 H645.6" stroke="#9aa0a6" stroke-width="0.7"/>
<path d="M632.6 141.6 H646.8" stroke="#c8c8c8" stroke-width="0.8"/>
</g>
<g id="ic-url" transform="translate(640.3 156.4) rotate(42)" fill="none" stroke="#0c0c84" stroke-width="2.2">
<rect x="-8" y="-2.2" width="8.4" height="4.4" rx="2.2"/>
<rect x="-0.6" y="-2.2" width="8.4" height="4.4" rx="2.2"/>
</g>
<g id="ic-delete"><g transform="translate(774.5 118.3)">
<circle r="13.8" fill="#fff" stroke="#6e6e6e" stroke-width="1.1"/>
<circle r="12.1" fill="none" stroke="#c8c8c8" stroke-width="0.8"/>
<circle r="11.4" fill="none" stroke="#7a7a7a" stroke-width="0.7"/>
<circle r="10.9" fill="url(#rgRed)"/>
<path d="M-10.4 -1 A10.4 10.4 0 0 1 10.4 -1 C6 -3.4 -6 -3.4 -10.4 -1 Z" fill="#fff" opacity=".32"/>
<rect x="-7.4" y="-2.9" width="14.8" height="5.6" rx="0.6" fill="url(#gBar)" stroke="#fff" stroke-width="1.1"/></g></g>
<g id="ic-primary">
<path d="M809 128.6 L824 132 L824.8 131 L809.6 127.4 Z" fill="#9aa8c0" opacity=".6"/>
<path d="M810.8 105.6 L824.7 106.9 L824.3 131.3 L809.5 128 Z" fill="#eaf3fb" stroke="#b4cde2" stroke-width="0.8" stroke-linejoin="round"/>
<path d="M810 120 L824.4 122 L824.3 131.3 L809.5 128 Z" fill="#d8e8f6" opacity=".8"/>
<path d="M812 112.6 L815.5 116 L820.6 111.4" fill="none" stroke="#4cc41c" stroke-width="1.9"/>
<path d="M829.4 108.4 L821.6 125.4" stroke="#12a012" stroke-width="3.6" stroke-linecap="round"/>
<path d="M829 108.8 L821.6 125" stroke="#30d030" stroke-width="1.8" stroke-linecap="round"/>
<path d="M820.3 124.4 L823.4 125.9 L820.6 128 Z" fill="#b4741c"/>
</g>
<g id="ic-circuit">
<path d="M979.6 120.6 C976 114.6 969.9 108.4 969.9 102 a9.9 9.9 0 0 1 19.8 0 C989.7 108.4 983.2 114.6 979.6 120.6 Z" fill="#000"/>
<circle cx="979.8" cy="102" r="6.3" fill="#fff"/>
<circle cx="979.8" cy="102" r="3.7" fill="#000"/>
<path d="M993.10,116.21 L995.19,116.96 L994.32,119.04 L992.32,118.09 L990.89,119.52 L991.84,121.52 L989.76,122.39 L989.01,120.30 L986.99,120.30 L986.24,122.39 L984.16,121.52 L985.11,119.52 L983.68,118.09 L981.68,119.04 L980.81,116.96 L982.90,116.21 L982.90,114.19 L980.81,113.44 L981.68,111.36 L983.68,112.31 L985.11,110.88 L984.16,108.88 L986.24,108.01 L986.99,110.10 L989.01,110.10 L989.76,108.01 L991.84,108.88 L990.89,110.88 L992.32,112.31 L994.32,111.36 L995.19,113.44 L993.10,114.19Z" fill="#000" stroke="#fff" stroke-width="2.4" stroke-linejoin="round"/>
<path d="M993.10,116.21 L995.19,116.96 L994.32,119.04 L992.32,118.09 L990.89,119.52 L991.84,121.52 L989.76,122.39 L989.01,120.30 L986.99,120.30 L986.24,122.39 L984.16,121.52 L985.11,119.52 L983.68,118.09 L981.68,119.04 L980.81,116.96 L982.90,116.21 L982.90,114.19 L980.81,113.44 L981.68,111.36 L983.68,112.31 L985.11,110.88 L984.16,108.88 L986.24,108.01 L986.99,110.10 L989.01,110.10 L989.76,108.01 L991.84,108.88 L990.89,110.88 L992.32,112.31 L994.32,111.36 L995.19,113.44 L993.10,114.19Z" fill="#000"/>
<circle cx="988" cy="115.2" r="5.4" fill="#000"/>
<circle cx="988" cy="115.2" r="2.9" fill="#fff"/>
</g>
<g id="ic-material">
<ellipse cx="1047" cy="114.2" rx="10" ry="1.6" fill="#b8bcc0" opacity=".5"/>
<path d="M1040 104 H1042 M1040 106 H1044 V117.6 H1042 M1044 100.6 V106 M1048.4 100 H1050 V94.6 H1048.8 M1044 106 H1050 V108 H1048.8" fill="none" stroke="#c4c8cc" stroke-width="0.9"/>
<rect x="1030.2" y="100.4" width="9.8" height="10.6" fill="#3c7cd2"/>
<rect x="1031.4" y="101.6" width="7.4" height="8.2" fill="#5c98e2"/>
<path d="M1033 103.8 H1037.4 M1033 105.8 H1037.4 M1033 107.8 H1037.4" stroke="#cfe2f8" stroke-width="0.8"/>
<rect x="1041.9" y="97.4" width="6.5" height="5.6" fill="#24a85a"/>
<rect x="1048.7" y="92" width="5" height="5" fill="#d8404a"/>
<rect x="1048.7" y="105.6" width="5" height="4.8" fill="#d8404a"/>
<rect x="1041.9" y="114.9" width="6.5" height="5.7" fill="#24a85a"/>
<path d="M1044.4 99 V101.6 M1044.4 116.6 V119.2" stroke="#c8f0d8" stroke-width="0.9"/>
</g>
<g id="ic-entryexit"><g transform="translate(1109.2 106.3)">
<circle r="13.8" fill="#fff" stroke="#6e6e6e" stroke-width="1.1"/>
<circle r="12.1" fill="none" stroke="#c8c8c8" stroke-width="0.8"/>
<circle r="11.4" fill="none" stroke="#7a7a7a" stroke-width="0.7"/>
<circle r="10.9" fill="url(#rgGreen)"/>
<path d="M-10.4 -1 A10.4 10.4 0 0 1 10.4 -1 C6 -3.4 -6 -3.4 -10.4 -1 Z" fill="#fff" opacity=".32"/>
<path d="M-10 0 L-4.4 -4.6 V-2.2 H4.4 V-4.6 L10 0 L4.4 4.6 V2.2 H-4.4 V4.6 Z" fill="#fff" stroke="#f0f0f0" stroke-width="0.4"/></g></g>
<g id="arrow-entry" fill="rgba(170,196,255,0.37)">
<path d="M741.8 291 H762.1 V374 L785 361 L751.7 417.6 L718.8 361 L741.8 374 Z"/>
<path d="M746.2 388.3 L751.7 390.8 L757.6 388.3 L751.7 397.6 Z"/>
</g>
<g id="arrow-exit" fill="rgba(106,176,108,0.52)">
<path d="M741.8 553.2 H762.1 V628 L785.2 615 L752 669.6 L719.1 615 L741.8 628 Z"/>
<path d="M746.6 641.8 L752 644.2 L757.6 641.8 L752 651.4 Z"/>
</g>
<g id="arrow-reroute" fill="rgba(222,120,134,0.29)">
<path d="M882 548 H901.7 C901 626.5 964.7 665.5 1036.2 666 L1024.3 644.3 L1080.6 676.1 L1024.3 708.5 L1037 684.8 C942.5 684 881 628 882 548 Z"/>
<path d="M1051.9 671.6 L1060.6 676.1 L1052 681 L1054.6 676.1 Z"/>
</g>
<g id="ic-addroute"><g transform="translate(1116 499)">
<circle r="7.5" fill="#fff" stroke="#8c8c8c" stroke-width="1"/>
<circle r="6.1" fill="none" stroke="#8c8c8c" stroke-width="0.7" opacity=".7"/>
<circle r="5.5" fill="#3fae3f"/>
<g transform="scale(.9)"><path d="M-1.5 -4.6 H1.5 V-1.5 H4.6 V1.5 H1.5 V4.6 H-1.5 V1.5 H-4.6 V-1.5 H-1.5 Z" fill="#fff"/></g></g></g>
</svg>

<div id="labels">
<span class="t" style="left:48.6px;top:15.0px;font-size:24px;color:#f0f2f4;transform:scaleX(1.167);-webkit-text-stroke:0.7px #1b2e3e;">Factory</span>
<span class="t" style="left:142.1px;top:15.0px;font-size:24px;color:#ffffff;transform:scaleX(1.183);-webkit-text-stroke:0.25px #1b2e3e;">Logix</span>
<span class="t" style="left:848.8px;top:3.1px;font-size:11px;font-weight:700;color:#fff;transform:scaleX(0.949);">Assembly:</span>
<span class="t" style="left:848.8px;top:18.9px;font-size:11px;font-weight:700;color:#fff;transform:scaleX(0.924);">Process Rev:</span>
<span class="t" style="left:848.8px;top:33.7px;font-size:11px;font-weight:700;color:#fff;transform:scaleX(0.941);">Release Status:</span>
<span class="t" style="left:928.7px;top:3.1px;font-size:11px;color:#fff;transform:scaleX(0.955);">Assy Z - 1</span>
<span class="t" style="left:929.5px;top:18.9px;font-size:11px;color:#fff;transform:scaleX(1.000);">1</span>
<span class="t" style="left:928.6px;top:33.7px;font-size:11px;color:#fff;transform:scaleX(1.007);">Under Construction</span>
<span class="t" style="left:211.3px;top:15.9px;font-size:6.5px;color:#75828e;transform:scaleX(1.000);">™</span>
<span class="t" style="left:20.1px;top:66.0px;font-size:15px;color:#202020;transform:scaleX(0.985);-webkit-text-stroke:0.22px #fff;">Process Definition</span>
<span class="t" style="left:56.7px;top:130.9px;font-size:13.5px;font-weight:700;color:#000;transform:scaleX(0.939);-webkit-text-stroke:0.12px #fff;">Process Flow</span>
<span class="t" style="left:56.6px;top:180.2px;font-size:13.5px;font-weight:700;color:#000;transform:scaleX(1.012);-webkit-text-stroke:0.12px #fff;">Editing - operation 3</span>
<span class="t" style="left:48.2px;top:271.6px;font-size:12px;color:#3a3a3a;transform:scaleX(0.990);">All steps can be viewed in any order</span>
<span class="t" style="left:33.1px;top:305.8px;font-size:12px;color:#1a1a1a;transform:scaleX(0.970);">Step List</span>
<span class="t" style="left:37.0px;top:361.1px;font-size:14px;color:#f78f1e;transform:scaleX(0.970);">Standard Step #1</span>
<span class="t" style="left:358.8px;top:69.8px;font-size:12px;color:#3a3a3a;transform:scaleX(1.009);">Document Tools</span>
<span class="t" style="left:384.0px;top:139.5px;font-size:12px;color:#3a3a44;transform:scaleX(1.004);">New</span>
<span class="t" style="left:429.0px;top:139.5px;font-size:12px;color:#3a3a44;transform:scaleX(0.979);">From</span>
<span class="t" style="left:419.0px;top:152.5px;font-size:12px;color:#3a3a44;transform:scaleX(0.992);">Template</span>
<span class="t" style="left:361.2px;top:172.0px;font-size:12px;color:#3a3a44;transform:scaleX(0.999);">Create Work Instruction</span>
<span class="t" style="left:496.2px;top:139.5px;font-size:12px;color:#3a3a44;transform:scaleX(1.024);">Import From</span>
<span class="t" style="left:501.9px;top:152.5px;font-size:12px;color:#3a3a44;transform:scaleX(1.018);">Document</span>
<span class="t" style="left:579.1px;top:139.5px;font-size:12px;color:#3a3a44;transform:scaleX(0.981);">Link To</span>
<span class="t" style="left:570.1px;top:152.5px;font-size:12px;color:#3a3a44;transform:scaleX(1.015);">Document</span>
<span class="t" style="left:650.9px;top:105.6px;font-size:12px;color:#3a3a44;transform:scaleX(0.975);">From Library</span>
<span class="t" style="left:650.9px;top:128.6px;font-size:12px;color:#3a3a44;transform:scaleX(0.964);">From Any Process</span>
<span class="t" style="left:650.9px;top:151.2px;font-size:12px;color:#3a3a44;transform:scaleX(0.940);clip-path:inset(2.4px 0 0 0);">From URL</span>
<span class="t" style="left:587.8px;top:172.0px;font-size:12px;color:#3a3a44;transform:scaleX(0.990);">Add Element</span>
<span class="t" style="left:757.8px;top:139.5px;font-size:12px;color:#3a3a44;transform:scaleX(1.003);">Delete</span>
<span class="t" style="left:799.2px;top:139.5px;font-size:12px;color:#3a3a44;transform:scaleX(0.989);">Mark as</span>
<span class="t" style="left:799.8px;top:152.5px;font-size:12px;color:#3a3a44;transform:scaleX(0.987);">Primary</span>
<span class="t" style="left:766.9px;top:172.0px;font-size:12px;color:#3a3a44;transform:scaleX(0.976);">Edit Element</span>
<span class="t" style="left:955.7px;top:124.7px;font-size:13px;color:#1a1a1a;transform:scaleX(0.942);">Circuit</span>
<span class="t" style="left:955.7px;top:141.0px;font-size:13px;color:#1a1a1a;transform:scaleX(0.970);">Mapping</span>
<span class="t" style="left:1020.8px;top:124.7px;font-size:13px;color:#1a1a1a;transform:scaleX(0.938);">Material</span>
<span class="t" style="left:1020.8px;top:141.0px;font-size:13px;color:#1a1a1a;transform:scaleX(0.921);">Setup</span>
<span class="t" style="left:1081.2px;top:124.7px;font-size:13px;color:#1a1a1a;transform:scaleX(0.912);">Entry / Exit</span>
<span class="t" style="left:422.5px;top:237.9px;font-size:19px;color:#151515;transform:scaleX(0.898);-webkit-text-stroke:0.45px #fff;">Normal Entry Point</span>
<span class="t" style="left:682.4px;top:272.0px;font-size:12.5px;font-weight:700;color:#0000ff;transform:scaleX(0.961);text-decoration:underline;">0 Conditions /  0 Actions</span>
<span class="t" style="left:580.9px;top:451.7px;font-size:67px;color:#ffffff;transform:scaleX(1.014);-webkit-text-stroke:0.8px #45648a;">operation 3</span>
<span class="t" style="left:682.4px;top:678.0px;font-size:12.5px;font-weight:700;color:#0000ff;transform:scaleX(0.961);text-decoration:underline;">0 Conditions /  0 Actions</span>
<span class="t" style="left:422.6px;top:709.2px;font-size:19px;color:#151515;transform:scaleX(0.886);-webkit-text-stroke:0.45px #fff;">Normal Exit Point</span>
<span class="t" id="reroute" style="left:1108.7px;top:680.6px;font-size:19px;color:#151515;-webkit-text-stroke:0.45px #fff;transform-origin:0 0;transform:rotate(-90deg) scaleX(0.846)">Re-Route Points</span>

</div>
</div>
</body>
</html>
